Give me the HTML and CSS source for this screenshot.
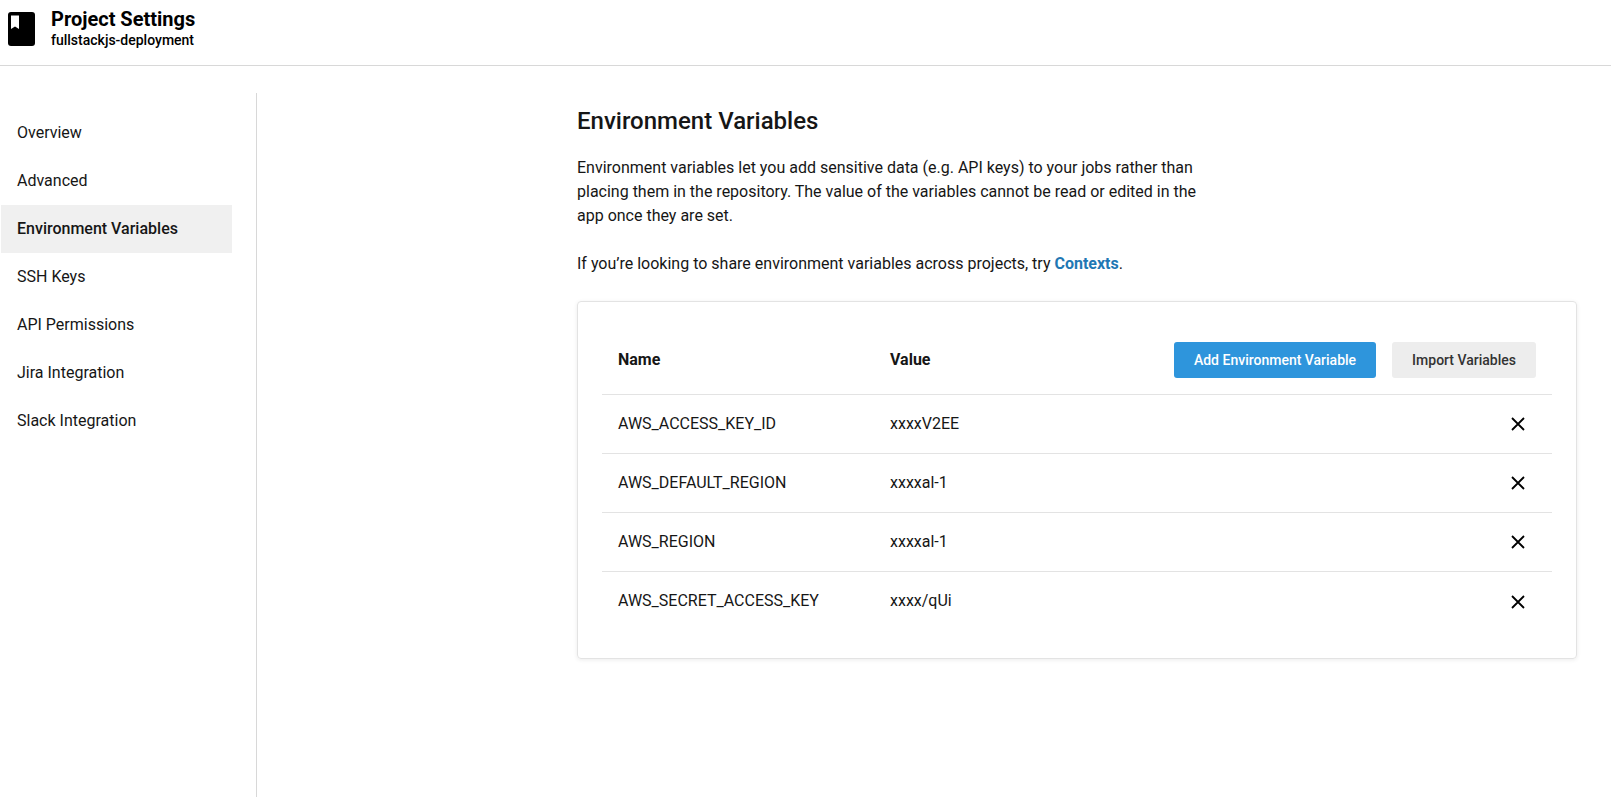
FILE: index.html
```html
<!DOCTYPE html>
<html lang="en">

<head>
    <meta charset="UTF-8">
    <meta name="viewport" content="width=device-width, initial-scale=1.0">
    <title>Project Settings</title>
    <link rel="stylesheet" href="styles.css">
</head>

<body>
    <header class="topbar">
        <svg class="project-icon" viewBox="0 0 27 34" width="27" height="34">
            <rect width="27" height="34" rx="3" fill="#000"></rect>
            <path d="M3 3.5 H11 V17 L7 14.5 L3 17 Z" fill="#fff"></path>
        </svg>
        <div class="project-title">
            <div class="project-heading">Project Settings</div>
            <div class="project-name">fullstackjs-deployment</div>
        </div>
    </header>

    <div class="layout">
        <nav class="sidebar">
            <a class="nav-item">Overview</a>
            <a class="nav-item">Advanced</a>
            <a class="nav-item active">Environment Variables</a>
            <a class="nav-item">SSH Keys</a>
            <a class="nav-item">API Permissions</a>
            <a class="nav-item">Jira Integration</a>
            <a class="nav-item">Slack Integration</a>
        </nav>

        <main class="content">
            <h1>Environment Variables</h1>
            <p class="intro">Environment variables let you add sensitive data (e.g. API keys) to your jobs rather than placing them in the repository. The value of the variables cannot be read or edited in the app once they are set.</p>
            <p class="share">If you’re looking to share environment variables across projects, try <a class="link">Contexts</a>.</p>

            <section class="card">
                <div class="row head">
                    <div class="col-name">Name</div>
                    <div class="col-value">Value</div>
                    <div class="actions">
                        <button class="btn primary">Add Environment Variable</button>
                        <button class="btn secondary">Import Variables</button>
                    </div>
                </div>
                <div class="row">
                    <div class="col-name">AWS_ACCESS_KEY_ID</div>
                    <div class="col-value">xxxxV2EE</div>
                    <svg class="remove" viewBox="0 0 14 14" width="14" height="14"><path d="M1 1 L13 13 M13 1 L1 13"></path></svg>
                </div>
                <div class="row">
                    <div class="col-name">AWS_DEFAULT_REGION</div>
                    <div class="col-value">xxxxal-1</div>
                    <svg class="remove" viewBox="0 0 14 14" width="14" height="14"><path d="M1 1 L13 13 M13 1 L1 13"></path></svg>
                </div>
                <div class="row">
                    <div class="col-name">AWS_REGION</div>
                    <div class="col-value">xxxxal-1</div>
                    <svg class="remove" viewBox="0 0 14 14" width="14" height="14"><path d="M1 1 L13 13 M13 1 L1 13"></path></svg>
                </div>
                <div class="row last">
                    <div class="col-name">AWS_SECRET_ACCESS_KEY</div>
                    <div class="col-value">xxxx/qUi</div>
                    <svg class="remove" viewBox="0 0 14 14" width="14" height="14"><path d="M1 1 L13 13 M13 1 L1 13"></path></svg>
                </div>
            </section>
        </main>
    </div>
</body>

</html>
```

FILE: styles.css
```css
* {
    box-sizing: border-box;
}

body {
    font-family: Roboto, sans-serif;
    font-size: 16px;
    color: #161616;
    background: #fff;
    margin: 0;
    height: 797px;
    overflow: hidden;
}

.topbar {
    display: flex;
    align-items: flex-start;
    height: 66px;
    padding: 12px 0 0 8px;
    border-bottom: 1px solid #d8d8d8;
}

.project-icon {
    margin-right: 16px;
}

.project-title {
    margin-top: -5px;
    color: #000;
}

.project-heading {
    font-size: 20px;
    font-weight: 700;
    line-height: 24px;
}

.project-name {
    font-size: 14px;
    font-weight: 500;
    line-height: 18px;
}

.layout {
    display: flex;
    height: 731px;
    padding-top: 27px;
}

.sidebar {
    width: 257px;
    padding: 16px 24px 0 1px;
    border-right: 1px solid #d8d8d8;
}

.nav-item {
    display: flex;
    align-items: center;
    height: 48px;
    padding: 0 0 2px 16px;
    font-size: 16px;
}

.nav-item.active {
    background: #f0f0f0;
    font-weight: 500;
}

.content {
    width: 1000px;
    margin-left: 320px;
}

h1 {
    font-size: 24px;
    font-weight: 500;
    line-height: 30px;
    margin: 13px 0 0;
}

.intro {
    width: 620px;
    line-height: 24px;
    margin: 20px 0 0;
}

.share {
    line-height: 24px;
    margin: 24px 0 0;
}

.link {
    color: #1f78b4;
    font-weight: 700;
}

.card {
    height: 358px;
    margin-top: 25px;
    padding: 24px 24px 0;
    border: 1px solid #e3e3e3;
    border-radius: 4px;
    box-shadow: 0 1px 4px rgba(0, 0, 0, 0.08);
}

.row {
    display: flex;
    align-items: center;
    height: 59px;
    padding: 0 16px;
    border-bottom: 1px solid #e3e3e3;
}

.row.head {
    height: 69px;
    padding-right: 16px;
    font-weight: 700;
}

.row.last {
    border-bottom: none;
}

.col-name {
    width: 272px;
    margin-bottom: 2px;
}

.col-value {
    flex: 1;
    margin-bottom: 2px;
}

.actions {
    display: flex;
    gap: 16px;
}

.btn {
    height: 36px;
    border: none;
    border-radius: 3px;
    padding: 0 20px;
    font-family: Roboto, sans-serif;
    font-size: 14px;
    font-weight: 500;
}

.btn.primary {
    background: #2e95dc;
    color: #fff;
}

.btn.secondary {
    background: #ededed;
    color: #333;
}

.remove {
    margin-right: 11px;
    fill: none;
    stroke: #000;
    stroke-width: 1.8;
}
```
